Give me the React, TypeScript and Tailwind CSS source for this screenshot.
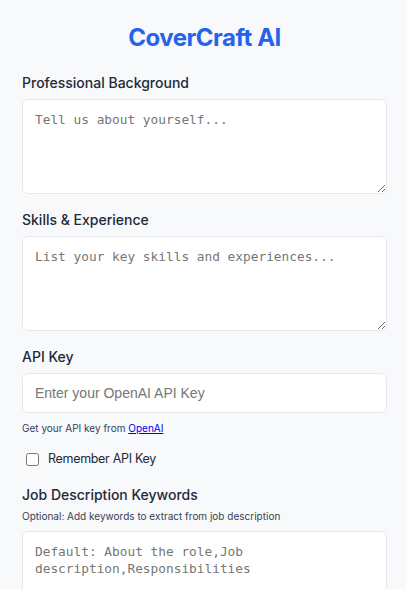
import React, { useState } from "react";

export default function App() {
  const [background, setBackground] = useState("");
  const [skills, setSkills] = useState("");
  const [apiKey, setApiKey] = useState("");
  const [remember, setRemember] = useState(false);
  const [keywords, setKeywords] = useState("");

  const labelCls = "block text-sm leading-5 font-medium text-gray-800 mb-[6px]";
  const areaCls =
    "block w-full h-[95px] rounded-md border border-gray-200 bg-white p-3 text-[12.8px] leading-[16.5px] text-gray-800 placeholder:text-[#767676] outline-none focus:ring-1 focus:ring-blue-500";

  return (
    <div className="min-h-screen bg-[#f8f9fb] pl-[22px] pr-[19px] pt-[22px] font-['Inter',sans-serif]">
      <h1 className="text-center text-2xl leading-8 font-bold tracking-[-0.02em] text-[#2563eb] mb-[19px]">CoverCraft AI</h1>

      {/* Background */}
      <div className="mb-4">
        <label className={labelCls}>Professional Background</label>
        <textarea
          value={background}
          onChange={(e) => setBackground(e.target.value)}
          placeholder="Tell us about yourself..."
          className={areaCls}
          style={{ fontFamily: "'DejaVu Sans Mono', monospace" }}
        />
      </div>

      {/* Skills */}
      <div className="mb-4">
        <label className={labelCls}>Skills &amp; Experience</label>
        <textarea
          value={skills}
          onChange={(e) => setSkills(e.target.value)}
          placeholder="List your key skills and experiences..."
          className={areaCls}
          style={{ fontFamily: "'DejaVu Sans Mono', monospace" }}
        />
      </div>

      {/* API key */}
      <div>
        <label className={labelCls}>API Key</label>
        <input
          type="password"
          value={apiKey}
          onChange={(e) => setApiKey(e.target.value)}
          placeholder="Enter your OpenAI API Key"
          className="block w-full h-10 rounded-md border border-gray-200 bg-white px-3 font-['Liberation_Sans',Arial,sans-serif] text-sm text-gray-800 placeholder:text-[#767676] outline-none focus:ring-1 focus:ring-blue-500"
        />
        <p className="mt-[7px] text-[10px] leading-4 text-gray-700">
          Get your API key from{" "}
          <a href="#" className="text-[#0000ee] underline">
            OpenAI
          </a>
        </p>
        <label className="mt-[13px] flex items-center text-[12.5px] leading-5 tracking-tight text-gray-800">
          <input
            type="checkbox"
            checked={remember}
            onChange={(e) => setRemember(e.target.checked)}
            className="ml-1 mr-[9px] h-[13px] w-[13px]"
          />
          Remember API Key
        </label>
      </div>

      {/* Keywords */}
      <div className="mt-[16px]">
        <label className="block text-sm leading-5 font-medium text-gray-800">Job Description Keywords</label>
        <p className="mt-[3px] mb-[7px] text-[10px] leading-4 text-gray-700">
          Optional: Add keywords to extract from job description
        </p>
        <textarea
          value={keywords}
          onChange={(e) => setKeywords(e.target.value)}
          placeholder="Default: About the role,Job description,Responsibilities"
          className={areaCls}
          style={{ fontFamily: "'DejaVu Sans Mono', monospace" }}
        />
      </div>
    </div>
  );
}
